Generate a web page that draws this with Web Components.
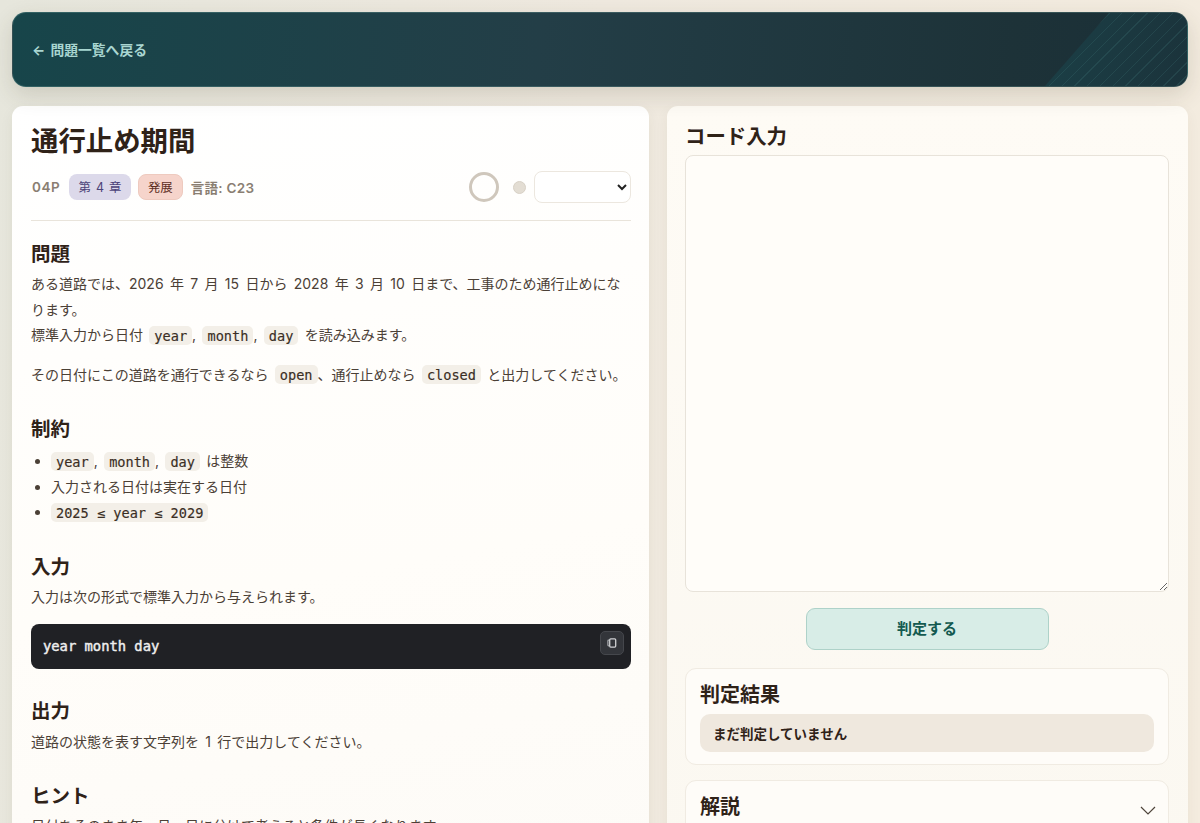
<!DOCTYPE html>
<html lang="ja">
<head>
<meta charset="utf-8">
<title>通行止め期間</title>
<style>
  html, body { margin: 0; height: 823px; overflow: hidden; }
  body {
    font-family: "Inter", "Noto Sans CJK JP", sans-serif;
    color: #2f2218;
    background: linear-gradient(100deg, #e6e6dc 0%, #efe9df 45%, #f4ecdf 100%);
  }
</style>
</head>
<body>
<app-shell>
  <top-bar slot="top">← 問題一覧へ戻る</top-bar>
  <problem-panel slot="left" pid="04P" name="通行止め期間" chapter="第 4 章" level="発展" lang-label="言語: C23">
    <prob-section heading="問題" style="margin-bottom: 29px">
      <p>ある道路では、2026 年 7 月 15 日から 2028 年 3 月 10 日まで、工事のため通行止めになります。<br>標準入力から日付 <inline-code>year</inline-code>, <inline-code>month</inline-code>, <inline-code>day</inline-code> を読み込みます。</p>
      <p class="gap">その日付にこの道路を通行できるなら <inline-code>open</inline-code>、通行止めなら <inline-code>closed</inline-code> と出力してください。</p>
    </prob-section>
    <prob-section heading="制約" style="margin-bottom: 29px">
      <ul>
        <li><inline-code>year</inline-code>, <inline-code>month</inline-code>, <inline-code>day</inline-code> は整数</li>
        <li>入力される日付は実在する日付</li>
        <li><inline-code>2025 ≤ year ≤ 2029</inline-code></li>
      </ul>
    </prob-section>
    <prob-section heading="入力" style="margin-bottom: 29px">
      <p>入力は次の形式で標準入力から与えられます。</p>
      <code-block>year month day</code-block>
    </prob-section>
    <prob-section heading="出力">
      <p style="margin-top: 5px">道路の状態を表す文字列を 1 行で出力してください。</p>
    </prob-section>
    <prob-section heading="ヒント">
      <p>日付をそのまま年、月、日に分けて考えると条件が長くなります。</p>
    </prob-section>
  </problem-panel>
  <code-panel slot="right"></code-panel>
</app-shell>

<script>
function define(name, html) {
  const tpl = document.createElement('template');
  tpl.innerHTML = html;
  customElements.define(name, class extends HTMLElement {
    constructor() {
      super();
      this.attachShadow({ mode: 'open' }).appendChild(tpl.content.cloneNode(true));
    }
  });
}

define('app-shell', `
<style>
  :host { display: block; padding: 12px; }
  .cols { display: grid; grid-template-columns: 637px 521px; gap: 18px; margin-top: 19px; }
</style>
<slot name="top"></slot>
<div class="cols">
  <slot name="left"></slot>
  <slot name="right"></slot>
</div>`);

define('top-bar', `
<style>
  :host {
    display: flex; align-items: center; box-sizing: border-box; position: relative; overflow: hidden;
    height: 75px; padding: 0 19px 2px; border-radius: 14px;
    border: 1px solid rgba(150, 200, 190, .22);
    background: linear-gradient(95deg, #17454a 0%, #233e47 45%, #1d3238 85%, #1a2f37 100%);
    box-shadow: 0 8px 22px rgba(70, 60, 40, .16);
    color: #a9d6d1; font-size: 13.8px; font-weight: 700; word-spacing: 2px;
  }
  .hatch {
    position: absolute; inset: 0 0 0 auto; width: 142px;
    clip-path: polygon(64px 0, 100% 0, 100% 100%, 0 100%);
    background:
      repeating-linear-gradient(135deg, rgba(70, 130, 130, .2) 0 1px, transparent 1px 9px),
      linear-gradient(100deg, #1b3f46 0%, #1b333b 100%);
  }
  span { position: relative; }
</style>
<div class="hatch"></div>
<span><slot></slot></span>`);

class ProblemPanel extends HTMLElement {
  constructor() {
    super();
    this.attachShadow({ mode: 'open' }).innerHTML = `
<style>
  :host {
    display: block; box-sizing: border-box; height: 760px; padding: 19px 18px 0 19px;
    border-radius: 11px; background: linear-gradient(170deg, #ffffff 0%, #fffdf9 60%, #fdfbf7 100%);
    box-shadow: 0 4px 14px rgba(70, 60, 40, .06);
  }
  h1 { margin: 0; font-size: 27.4px; line-height: 32px; font-weight: 700; color: #2f2218; }
  .meta {
    display: flex; align-items: center; height: 32px; margin-top: 14px; padding-bottom: 17px;
    border-bottom: 1px solid #e9e4db; font-size: 13.5px; font-weight: 600; color: #8a7e72;
  }
  .pid { letter-spacing: .5px; margin-left: 1px; }
  .badge {
    display: inline-flex; align-items: center; height: 26px; box-sizing: border-box; border-radius: 8px;
    padding: 0 9px; margin-left: 7px; font-weight: 400; font-size: 12.4px; word-spacing: 2px;
  }
  .chapter { background: #dcd9ea; color: #4c4479; margin-left: 9px; padding: 0 9.5px; word-spacing: 1.5px; }
  .level { background: #f6d4cb; color: #5d2f24; border: 1px solid #eecabf; }
  .lang { margin-left: 8px; letter-spacing: .3px; }
  .spacer { flex: 1; }
  .ring { width: 30px; height: 30px; box-sizing: border-box; border: 3px solid #cfc7bc; border-radius: 50%; }
  .dot { width: 13px; height: 13px; box-sizing: border-box; margin-left: 14px; border-radius: 50%; background: #e3ddd3; border: 1px solid #d8d1c6; }
  select { width: 97px; height: 32px; margin-left: 8px; border: 1px solid #ece7df; border-radius: 8px; background: #fff; color: #222; font-size: 13px; }
</style>
<h1></h1>
<div class="meta">
  <span class="pid"></span>
  <span class="badge chapter"></span>
  <span class="badge level"></span>
  <span class="lang"></span>
  <span class="spacer"></span>
  <span class="ring"></span>
  <span class="dot"></span>
  <select><option></option></select>
</div>
<slot></slot>`;
  }
  connectedCallback() {
    const s = this.shadowRoot;
    s.querySelector('h1').textContent = this.getAttribute('name');
    s.querySelector('.pid').textContent = this.getAttribute('pid');
    s.querySelector('.chapter').textContent = this.getAttribute('chapter');
    s.querySelector('.level').textContent = this.getAttribute('level');
    s.querySelector('.lang').textContent = this.getAttribute('lang-label');
  }
}
customElements.define('problem-panel', ProblemPanel);

class ProbSection extends HTMLElement {
  constructor() {
    super();
    this.attachShadow({ mode: 'open' }).innerHTML = `
<style>
  :host { display: block; margin-top: 20px; margin-bottom: 28px; font-size: 14px; line-height: 25.5px; color: #4b4036; word-spacing: 2.4px; }
  h2 { margin: 0; font-size: 19.5px; line-height: 26px; font-weight: 700; color: #2f2218; word-spacing: 0; }
  ::slotted(p) { margin: 4px 0 0; }
  ::slotted(p.gap) { margin-top: 14px; }
  ::slotted(ul) { margin: 6px 0 0; padding-left: 20px; }
</style>
<h2></h2>
<slot></slot>`;
  }
  connectedCallback() {
    this.shadowRoot.querySelector('h2').textContent = this.getAttribute('heading');
  }
}
customElements.define('prob-section', ProbSection);

define('inline-code', `
<style>
  :host {
    display: inline; padding: 1.5px 5px; border-radius: 5px; background: #f3efe8; line-height: 1;
    font-family: "DejaVu Sans Mono", monospace; font-size: 13.6px; color: #3a2e24;
    word-spacing: 0; -webkit-text-stroke: .15px #3a2e24;
  }
</style>
<slot></slot>`);

define('code-block', `
<style>
  :host {
    display: flex; align-items: center; justify-content: space-between; box-sizing: border-box; height: 45px;
    margin: 15px 0 0; padding: 1px 7px 0 12px; border-radius: 8px; background: #202125; color: #eeeeee;
    font-family: "DejaVu Sans Mono", monospace; font-size: 13.8px; font-weight: 400; word-spacing: 0;
    -webkit-text-stroke: .45px #eeeeee;
  }
  button {
    display: flex; align-items: center; justify-content: center; align-self: flex-start;
    width: 24px; height: 24px; margin-top: 6px; padding: 0; box-sizing: border-box;
    border: 1px solid #45474c; border-radius: 5px; background: #33353a;
  }
</style>
<span><slot></slot></span>
<button aria-label="copy">
  <svg width="12" height="12" viewBox="0 0 12 12" fill="none">
    <path d="M3.2 3.2H2.6C2.2 3.2 1.9 3.5 1.9 3.9v4.2C1.9 8.5 2.2 8.8 2.6 8.8h.6" stroke="#a9abaf" stroke-width="1.2"/>
    <rect x="3.7" y="1.9" width="6" height="8.2" rx="1" stroke="#cfd0d3" stroke-width="1.3"/>
  </svg>
</button>`);

define('code-panel', `
<style>
  :host {
    display: block; box-sizing: border-box; height: 760px; padding: 18px 19px 0 18px;
    border-radius: 11px; background: linear-gradient(180deg, #fefbf5 0%, #fbf8f1 100%);
    box-shadow: 0 4px 14px rgba(70, 60, 40, .05);
  }
  h2 { margin: 0; font-size: 20.4px; line-height: 26px; font-weight: 700; color: #2f2218; }
  textarea {
    display: block; width: 100%; height: 437px; box-sizing: border-box; margin-top: 5px; padding: 12px;
    border: 1px solid #e8e3da; border-radius: 8px; background: #fffdf9; outline: none;
  }
  .act { display: flex; justify-content: center; margin-top: 16px; }
  button {
    width: 243px; height: 42px; padding: 0 0 3px; border: 1px solid #aed2c9; border-radius: 9px; background: #d8ede7;
    font: 700 15px "Inter", "Noto Sans CJK JP", sans-serif; color: #145a50;
  }
</style>
<h2>コード入力</h2>
<textarea spellcheck="false"></textarea>
<div class="act"><button>判定する</button></div>
<side-card heading="判定結果" style="margin-top: 18px"><status-line>まだ判定していません</status-line></side-card>
<side-card heading="解説" fold style="margin-top: 15px"></side-card>`);

class SideCard extends HTMLElement {
  constructor() {
    super();
    this.attachShadow({ mode: 'open' }).innerHTML = `
<style>
  :host {
    display: block; box-sizing: border-box; padding: 13px 14px 12px 14px;
    border: 1px solid #f0ebe2; border-radius: 11px; background: #fefcf8;
  }
  .head { display: flex; align-items: center; justify-content: space-between; }
  h3 { margin: 0; font-size: 20px; line-height: 27px; font-weight: 700; color: #2f2218; }
  svg { display: none; margin: 4px -3px 0 0; }
  :host([fold]) svg { display: block; }
</style>
<div class="head"><h3></h3>
  <svg width="18" height="18" viewBox="0 0 18 18" fill="none"><path d="M2 6l7 7 7-7" stroke="#4f453b" stroke-width="1.2"/></svg>
</div>
<slot></slot>`;
  }
  connectedCallback() {
    this.shadowRoot.querySelector('h3').textContent = this.getAttribute('heading');
  }
}
customElements.define('side-card', SideCard);

define('status-line', `
<style>
  :host {
    display: flex; align-items: center; box-sizing: border-box; height: 38px; margin-top: 5px; padding: 0 13px;
    border-radius: 10px; background: #efe8de; font-size: 13.5px; font-weight: 600; color: #2f2218;
  }
</style>
<slot></slot>`);
</script>
</body>
</html>
